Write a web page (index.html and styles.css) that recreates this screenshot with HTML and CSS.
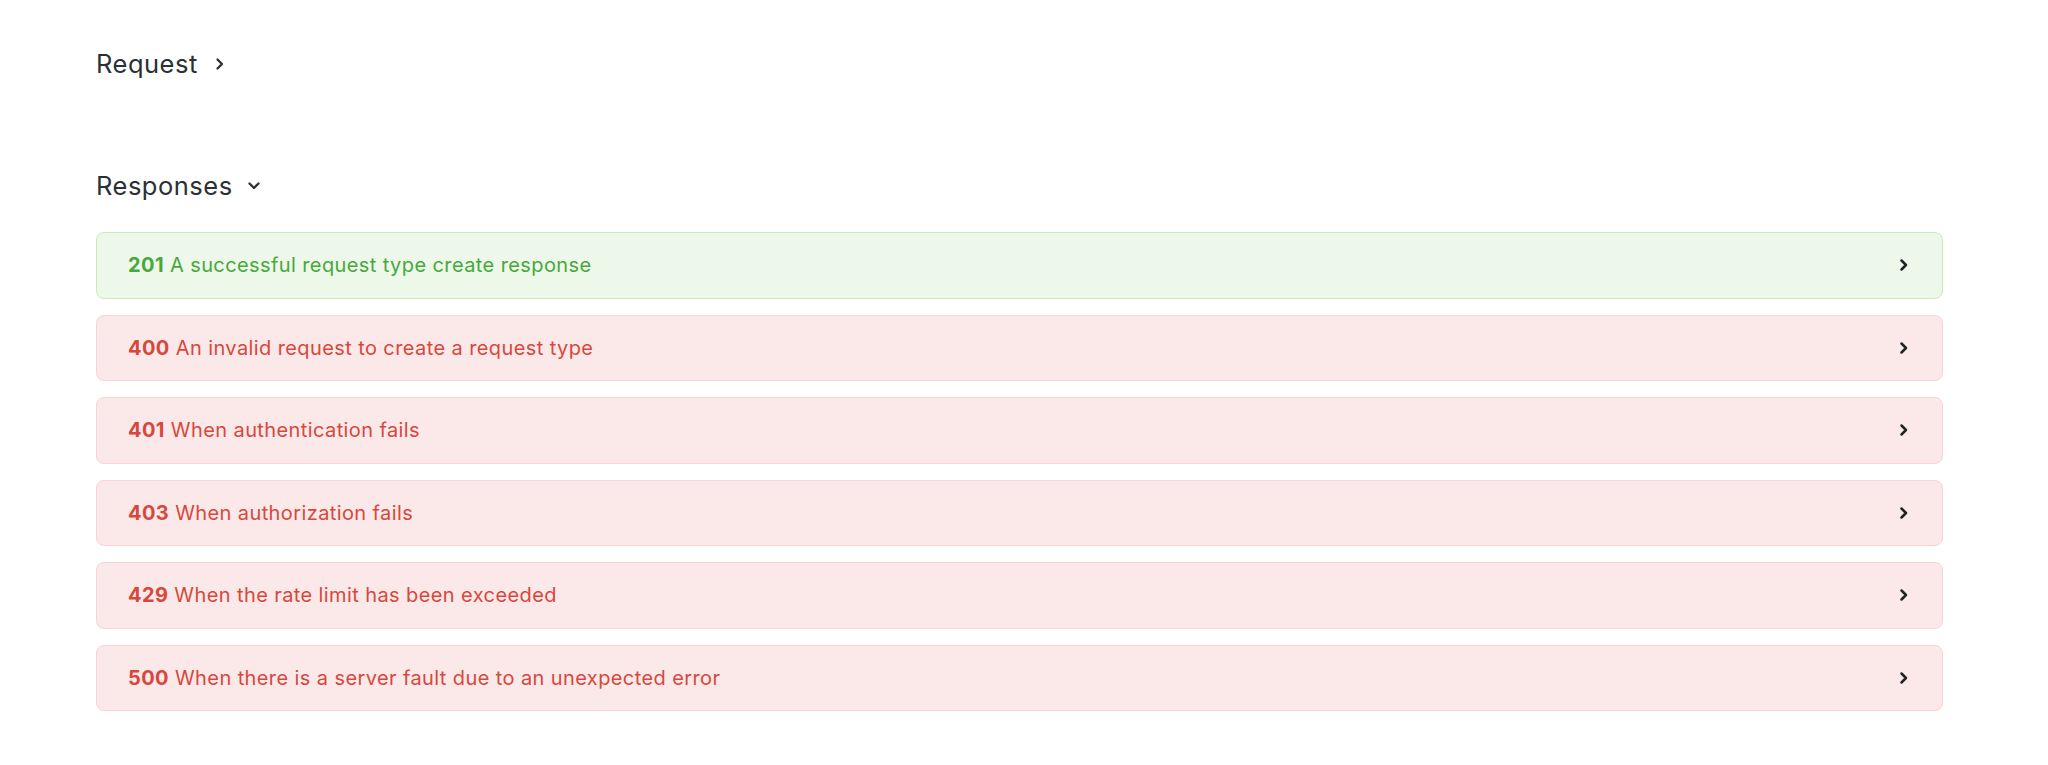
FILE: index.html
```html
<!DOCTYPE html>
<html>
<head>
<meta charset="utf-8">
<link rel="stylesheet" href="styles.css">
</head>
<body>
<main class="page">
  <section class="section">
    <h2 class="section-title">Request
      <svg class="chev-right" width="10" height="14" viewBox="0 0 10 14"><path d="M2.5 2.5 L7 7 L2.5 11.5" fill="none" stroke="#2b3036" stroke-width="2.3" stroke-linecap="round" stroke-linejoin="round"/></svg>
    </h2>
  </section>
  <section class="section responses">
    <h2 class="section-title">Responses
      <svg class="chev-down" width="14" height="10" viewBox="0 0 14 10"><path d="M2.5 2.5 L7 7 L11.5 2.5" fill="none" stroke="#2b3036" stroke-width="2.3" stroke-linecap="round" stroke-linejoin="round"/></svg>
    </h2>
    <div class="list">
      <div class="row ok"><span class="text"><b>201</b> A successful request type create response</span><svg class="row-chev" width="10" height="14" viewBox="0 0 10 14"><path d="M2.5 2.5 L7 7 L2.5 11.5" fill="none" stroke="#1f2328" stroke-width="2.5" stroke-linecap="round" stroke-linejoin="round"/></svg></div>
      <div class="row err"><span class="text"><b>400</b> An invalid request to create a request type</span><svg class="row-chev" width="10" height="14" viewBox="0 0 10 14"><path d="M2.5 2.5 L7 7 L2.5 11.5" fill="none" stroke="#1f2328" stroke-width="2.5" stroke-linecap="round" stroke-linejoin="round"/></svg></div>
      <div class="row err"><span class="text"><b>401</b> When authentication fails</span><svg class="row-chev" width="10" height="14" viewBox="0 0 10 14"><path d="M2.5 2.5 L7 7 L2.5 11.5" fill="none" stroke="#1f2328" stroke-width="2.5" stroke-linecap="round" stroke-linejoin="round"/></svg></div>
      <div class="row err"><span class="text"><b>403</b> When authorization fails</span><svg class="row-chev" width="10" height="14" viewBox="0 0 10 14"><path d="M2.5 2.5 L7 7 L2.5 11.5" fill="none" stroke="#1f2328" stroke-width="2.5" stroke-linecap="round" stroke-linejoin="round"/></svg></div>
      <div class="row err"><span class="text"><b>429</b> When the rate limit has been exceeded</span><svg class="row-chev" width="10" height="14" viewBox="0 0 10 14"><path d="M2.5 2.5 L7 7 L2.5 11.5" fill="none" stroke="#1f2328" stroke-width="2.5" stroke-linecap="round" stroke-linejoin="round"/></svg></div>
      <div class="row err"><span class="text"><b>500</b> When there is a server fault due to an unexpected error</span><svg class="row-chev" width="10" height="14" viewBox="0 0 10 14"><path d="M2.5 2.5 L7 7 L2.5 11.5" fill="none" stroke="#1f2328" stroke-width="2.5" stroke-linecap="round" stroke-linejoin="round"/></svg></div>
    </div>
  </section>
</main>
</body>
</html>
```

FILE: styles.css
```css
* { box-sizing: border-box; }
html, body { margin: 0; padding: 0; background: #ffffff; }
body {
  font-family: "Inter", "Liberation Sans", sans-serif;
  color: #2b3036;
}
.page {
  padding: 46px 105px 0 96px;
}
.section-title {
  margin: 0;
  font-weight: 400;
  font-size: 25.5px;
  line-height: 36px;
  letter-spacing: 0.5px;
  color: #2b3036;
  display: flex;
  align-items: center;
  gap: 17px;
}
.responses { margin-top: 86px; }
.responses .section-title { gap: 14px; }
.list {
  margin-top: 28px;
  display: flex;
  flex-direction: column;
  gap: 16px;
}
.row {
  height: 66.5px;
  border: 1px solid;
  border-radius: 8px;
  display: flex;
  align-items: center;
  justify-content: space-between;
  padding: 0 33px 0 31px;
  font-size: 20px;
  letter-spacing: 0.4px;
}
.row b { font-weight: 700; }
.ok { background: #edf7ea; border-color: #c8ebba; color: #46a93c; }
.err { background: #fbe9e9; border-color: #f7d3d3; color: #d8473c; }
.row-chev { display: block; }
```
